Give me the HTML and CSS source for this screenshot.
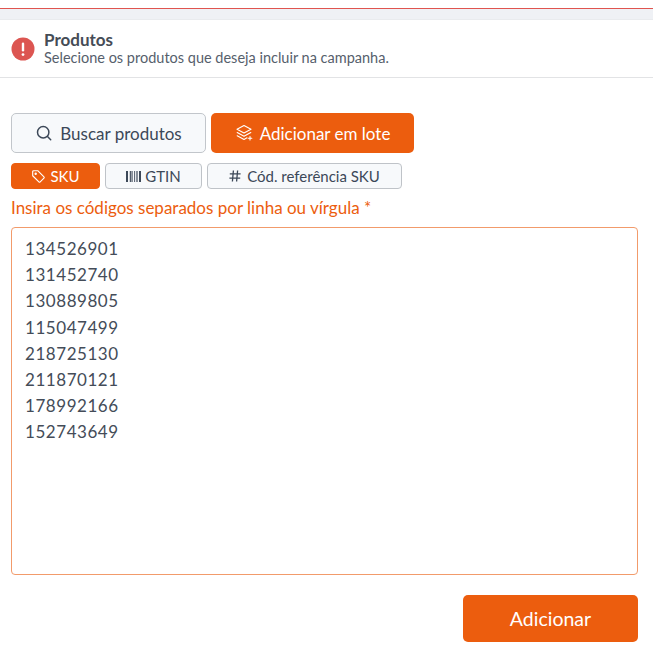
FILE: index.html
```html
<!DOCTYPE html>
<html lang="pt-BR">
<head>
<meta charset="utf-8">
<title>Produtos</title>
<link rel="stylesheet" href="styles.css">
</head>
<body>
<div class="topline"></div>
<div class="band"></div>
<header class="section-head">
  <svg class="alert-icon" viewBox="0 0 24 24" width="24" height="24"><circle cx="12" cy="12" r="11.5" fill="#dc5551"/><rect x="10.8" y="5.5" width="2.4" height="9" rx="1.2" fill="#fff"/><circle cx="12" cy="17.6" r="1.4" fill="#fff"/></svg>
  <div>
    <h1 class="title">Produtos</h1>
    <p class="subtitle">Selecione os produtos que deseja incluir na campanha.</p>
  </div>
</header>
<main class="content">
  <div class="mode-row">
    <button class="mode mode-light">
      <svg viewBox="0 0 18 18" width="18" height="18" fill="none" stroke="#3c4858" stroke-width="1.5" stroke-linecap="round"><circle cx="8.2" cy="8.2" r="5.7"/><path d="M12.5 12.5l3.2 3.2"/></svg>
      Buscar produtos
    </button>
    <button class="mode mode-active">
      <svg viewBox="0 0 18 18" width="18" height="18" fill="none" stroke="#fff" stroke-width="1.1" stroke-linejoin="round" stroke-linecap="round"><path d="M9 1.5l7 3.7-7 3.7-7-3.7z"/><path d="M2.2 8.6L9 12.2l6.8-3.6"/><path d="M2.2 11.8L9 15.4l3-1.6"/><path d="M15 12.5v3.5M13.2 14.2h3.6"/></svg>
      Adicionar em lote
    </button>
  </div>
  <div class="chip-row">
    <button class="chip chip-active chip-sku">
      <svg viewBox="0 0 16 16" width="15" height="15" fill="none" stroke="#fff" stroke-width="1.2" stroke-linejoin="round"><path d="M1.8 2.8c0-.6.4-1 1-1h4.4l6.6 6.6c.4.4.4 1 0 1.4l-4 4c-.4.4-1 .4-1.4 0L1.8 7.2z"/><circle cx="5" cy="5" r=".7"/></svg>
      SKU
    </button>
    <button class="chip chip-gtin">
      <svg viewBox="0 0 15 11" width="15" height="11" fill="#3c4858"><rect x="0" y="0" width="2" height="11"/><rect x="3.8" y="0" width="1.1" height="11"/><rect x="5.5" y="0" width="1.1" height="11"/><rect x="8.2" y="0" width=".9" height="11"/><rect x="10.4" y="0" width="1.2" height="11"/><rect x="13" y="0" width="2" height="11"/></svg>
      GTIN
    </button>
    <button class="chip chip-ref">
      <svg viewBox="0 0 12 12" width="12" height="12" fill="none" stroke="#3c4858" stroke-width="1.3"><path d="M4.4 .5L3.4 11.5M8.6 .5L7.6 11.5M.8 3.9h10.8M.4 8.1h10.8"/></svg>
      Cód. referência SKU
    </button>
  </div>
  <label class="field-label" for="codes">Insira os códigos separados por linha ou vírgula *</label>
  <textarea class="codes" id="codes">134526901
131452740
130889805
115047499
218725130
211870121
178992166
152743649</textarea>
  <div class="actions">
    <button class="submit">Adicionar</button>
  </div>
</main>
</body>
</html>
```
FILE: styles.css
```css
* { box-sizing: border-box; }
html, body { margin: 0; padding: 0; background: #fff; }
body { width: 653px; height: 658px; overflow: hidden; font-family: "Lato", "Noto Sans", sans-serif; color: #3c4858; }
.topline { height: 9px; border-bottom: 1px solid #e0544f; }
.band { height: 11px; background: #eff1f5; border-bottom: 1px solid #e9ebee; }
.section-head { height: 58px; display: flex; align-items: center; gap: 9px; padding: 0 11px 0; border-bottom: 1px solid #e2e3e5; }
.title { margin: 0; font-size: 17px; line-height: 19px; font-weight: 700; color: #454c56; }
.subtitle { margin: 0; font-size: 14.5px; line-height: 18px; color: #56606c; }
.content { padding: 35px 15px 0 11px; }
button { font-family: inherit; cursor: pointer; display: flex; align-items: center; justify-content: center; }
.mode-row { display: flex; gap: 5px; }
.mode { height: 40px; border-radius: 5px; font-size: 17px; gap: 7px; padding: 0; }
.mode-light { width: 195px; background: #f7f9fb; border: 1px solid #c2c6cb; color: #3c4858; }
.mode-active { width: 203px; background: #ec5d0e; border: 0; color: #fff; }
.chip-row { display: flex; gap: 5px; margin-top: 10px; }
.chip { height: 26px; border-radius: 4px; font-size: 15px; gap: 4px; padding: 0; background: #f7f9fb; border: 1px solid #bfc3c8; color: #3c4858; }
.chip-active { background: #ec5d0e; border-color: #ec5d0e; color: #fff; }
.chip-sku { width: 89px; }
.chip-gtin { width: 97px; }
.chip-ref { width: 195px; gap: 6px; }
.field-label { display: block; margin-top: 7px; font-size: 17px; line-height: 24px; color: #ec5d0e; }
.codes { display: block; width: 627px; height: 348px; margin-top: 7px; padding: 8px 13px; border: 1px solid #f29b6b; border-radius: 4px; resize: none; outline: 0; font-family: inherit; font-size: 17px; line-height: 26.2px; letter-spacing: .55px; color: #444c58; background: #fff; }
.actions { display: flex; justify-content: flex-end; margin-top: 20px; }
.submit { width: 175px; height: 47px; background: #ec5d0e; border: 0; border-radius: 5px; color: #fff; font-size: 19.5px; }
```
